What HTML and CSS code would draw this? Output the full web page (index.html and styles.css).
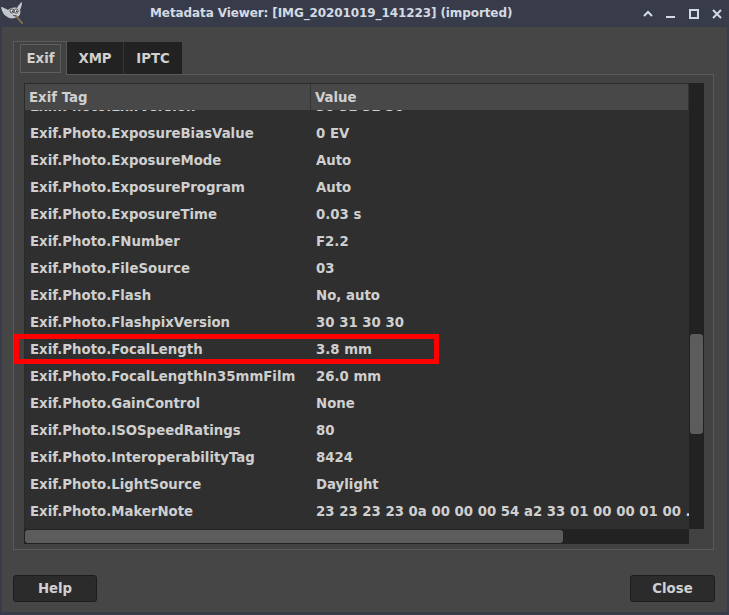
FILE: index.html
```html
<!DOCTYPE html>
<html>
<head>
<meta charset="utf-8">
<link rel="stylesheet" href="styles.css">
</head>
<body>
<div class="window">
  <div class="titlebar">
    <svg class="app-icon" width="24" height="24" viewBox="0 0 24 24">
      <path d="M1 6 C3 6 6 8 8 9 C10 7 14 6 17 7 C18 5 20 2 22 1 C22 4 21 7 20 9 C21 12 20 15 17 16 C14 18 9 18 6 15 C4 14 2 11 1 6 Z" fill="#c3c6cc"/>
      <circle cx="12" cy="10" r="2" fill="#f4f4f4" stroke="#2e2e2e" stroke-width="0.8"/>
      <circle cx="16.2" cy="10" r="2" fill="#f4f4f4" stroke="#2e2e2e" stroke-width="0.8"/>
      <circle cx="12.4" cy="10.2" r="0.8" fill="#1e1e1e"/>
      <circle cx="16.6" cy="10.2" r="0.8" fill="#1e1e1e"/>
      <path d="M16 15 L22 22" stroke="#8a7550" stroke-width="1.8" stroke-linecap="round"/>
      <path d="M13 14.5 L16 15" stroke="#2e2e2e" stroke-width="0.8"/>
    </svg>
    <div class="title">Metadata Viewer: [IMG_20201019_141223] (imported)</div>
    <div class="controls">
      <svg width="12" height="10" viewBox="0 0 12 10"><path d="M2 7 L6 3 L10 7" fill="none" stroke="#d3dae3" stroke-width="2"/></svg>
      <svg width="12" height="10" viewBox="0 0 12 10"><rect x="1" y="7" width="9" height="2" fill="#d3dae3"/></svg>
      <svg width="12" height="10" viewBox="0 0 12 10"><rect x="2" y="1" width="8" height="8" fill="none" stroke="#d3dae3" stroke-width="2"/></svg>
      <svg width="12" height="10" viewBox="0 0 12 10"><path d="M2 1 L10 9 M10 1 L2 9" stroke="#d3dae3" stroke-width="2"/></svg>
    </div>
  </div>
  <div class="content">
    <div class="notebook">
      <div class="tabs">
        <div class="tab active"><span class="focus">Exif</span></div>
        <div class="tab xmp">XMP</div>
        <div class="tab iptc">IPTC</div>
      </div>
      <div class="page">
        <div class="tree">
          <div class="tree-main">
            <div class="viewport">
              <div class="header">
                <div class="hcell c1">Exif Tag</div>
                <div class="hcell c2">Value</div>
              </div>
              <div class="rows-clip">
                <div class="rows">
                  <div class="row"><span class="c1">Exif.Photo.ExifVersion</span><span class="c2">30 32 32 30</span></div>
                  <div class="row"><span class="c1">Exif.Photo.ExposureBiasValue</span><span class="c2">0 EV</span></div>
                  <div class="row"><span class="c1">Exif.Photo.ExposureMode</span><span class="c2">Auto</span></div>
                  <div class="row"><span class="c1">Exif.Photo.ExposureProgram</span><span class="c2">Auto</span></div>
                  <div class="row"><span class="c1">Exif.Photo.ExposureTime</span><span class="c2">0.03 s</span></div>
                  <div class="row"><span class="c1">Exif.Photo.FNumber</span><span class="c2">F2.2</span></div>
                  <div class="row"><span class="c1">Exif.Photo.FileSource</span><span class="c2">03</span></div>
                  <div class="row"><span class="c1">Exif.Photo.Flash</span><span class="c2">No, auto</span></div>
                  <div class="row"><span class="c1">Exif.Photo.FlashpixVersion</span><span class="c2">30 31 30 30</span></div>
                  <div class="row"><span class="c1">Exif.Photo.FocalLength</span><span class="c2">3.8 mm</span></div>
                  <div class="row"><span class="c1">Exif.Photo.FocalLengthIn35mmFilm</span><span class="c2">26.0 mm</span></div>
                  <div class="row"><span class="c1">Exif.Photo.GainControl</span><span class="c2">None</span></div>
                  <div class="row"><span class="c1">Exif.Photo.ISOSpeedRatings</span><span class="c2">80</span></div>
                  <div class="row"><span class="c1">Exif.Photo.InteroperabilityTag</span><span class="c2">8424</span></div>
                  <div class="row"><span class="c1">Exif.Photo.LightSource</span><span class="c2">Daylight</span></div>
                  <div class="row"><span class="c1">Exif.Photo.MakerNote</span><span class="c2">23 23 23 23 0a 00 00 00 54 a2 33 01 00 00 01 00 ...</span></div>
                </div>
              </div>
            </div>
            <div class="vscroll"><div class="vthumb"></div></div>
          </div>
          <div class="hscroll"><div class="hthumb"></div></div>
        </div>
      </div>
    </div>
    <div class="buttons">
      <div class="btn">Help</div>
      <div class="btn close">Close</div>
    </div>
  </div>
  <div class="highlight"></div>
</div>
</body>
</html>
```
FILE: styles.css
```css
html, body {
  margin: 0;
  padding: 0;
  background: #383c4a;
}
.window {
  position: relative;
  width: 729px;
  height: 615px;
  background: #383c4a;
  font-family: "DejaVu Sans", sans-serif;
  font-weight: bold;
  font-size: 13.3px;
  color: #cfcfcf;
  display: flex;
  flex-direction: column;
  overflow: hidden;
}
.titlebar {
  height: 27px;
  display: flex;
  align-items: center;
  position: relative;
  color: #d3dae3;
}
.app-icon {
  margin-left: 0px;
  margin-top: -1px;
}
.title {
  position: absolute;
  left: 150px;
  top: 6px;
  font-size: 12px;
  font-weight: bold;
  letter-spacing: -0.1px;
}
.controls {
  margin-left: auto;
  margin-right: 6px;
  display: flex;
  gap: 11px;
}
.content {
  flex: 1;
  margin: 0 2px 3px 2px;
  background: #464646;
  display: flex;
  flex-direction: column;
  padding: 13px 13px 0 11px;
}
.notebook {
  display: flex;
  flex-direction: column;
}
.tabs {
  display: flex;
  align-items: flex-end;
  height: 34px;
}
.tab {
  height: 32px;
  box-sizing: border-box;
  background: #222222;
  display: flex;
  align-items: center;
  justify-content: center;
  color: #d0d0d0;
}
.tab.xmp {
  width: 57px;
  border-right: 1px solid #353535;
}
.tab.iptc {
  width: 58px;
}
.tab.active {
  width: 54px;
  height: 34px;
  background: #424242;
  border: 1px solid #5a5a5a;
  border-bottom: none;
  padding: 2px 5px 0 6px;
  margin-bottom: -1px;
  position: relative;
  z-index: 2;
  align-items: flex-start;
  justify-content: flex-start;
}
.focus {
  width: 41px;
  height: 29px;
  box-sizing: border-box;
  border: 1px solid #5e5e5e;
  display: flex;
  align-items: center;
  justify-content: center;
  padding-bottom: 1px;
}
.page {
  height: 476px;
  box-sizing: border-box;
  border: 1px solid #5a5a5a;
  background: #424242;
  padding: 8px 9px 5px 10px;
}
.tree {
  display: flex;
  flex-direction: column;
  width: 680px;
  height: 461px;
}
.tree-main {
  display: flex;
  height: 446px;
}
.viewport {
  flex: 1;
  display: flex;
  flex-direction: column;
  background: #2f2f2f;
  border-top: 1px solid #2a2a2a;
  border-left: 1px solid #2a2a2a;
  overflow: hidden;
}
.header {
  height: 26px;
  display: flex;
  background: #484848;
  flex-shrink: 0;
  color: #d0d0d0;
}
.hcell {
  display: flex;
  align-items: center;
  box-sizing: border-box;
}
.hcell.c1 {
  width: 286px;
  padding-left: 4px;
  border-right: 1px solid #353535;
}
.hcell.c2 {
  flex: 1;
  padding-left: 4px;
  border-right: 1px solid #353535;
}
.rows-clip {
  flex: 1;
  overflow: hidden;
  position: relative;
}
.rows {
  margin-top: -17px;
}
.row {
  height: 27px;
  display: flex;
  align-items: center;
  white-space: nowrap;
}
.row .c1 {
  width: 291px;
  box-sizing: border-box;
  padding-left: 5px;
  flex-shrink: 0;
}
.row .c2 {
  padding-left: 0;
}
.vscroll {
  width: 15px;
  background: #222222;
  position: relative;
}
.vthumb {
  position: absolute;
  left: 1px;
  right: 1px;
  top: 251px;
  height: 100px;
  border-radius: 3px;
  background: #5c5c5c;
}
.hscroll {
  width: 665px;
  height: 15px;
  background: #222222;
  position: relative;
}
.hthumb {
  position: absolute;
  left: 1px;
  top: 1px;
  bottom: 1px;
  width: 538px;
  border-radius: 3px;
  background: #5c5c5c;
}
.buttons {
  display: flex;
  justify-content: space-between;
  margin-top: 25px;
}
.btn {
  width: 84px;
  height: 27px;
  box-sizing: border-box;
  border: 1px solid #1c1c1c;
  border-radius: 3px;
  background: #2b2b2b;
  display: flex;
  align-items: center;
  justify-content: center;
  color: #d0d0d0;
}
.btn.close {
  width: 85px;
  margin-right: -1px;
}
.highlight {
  position: absolute;
  left: 14px;
  top: 334px;
  width: 425px;
  height: 30px;
  box-sizing: border-box;
  border: 5px solid #ff0000;
}
```
